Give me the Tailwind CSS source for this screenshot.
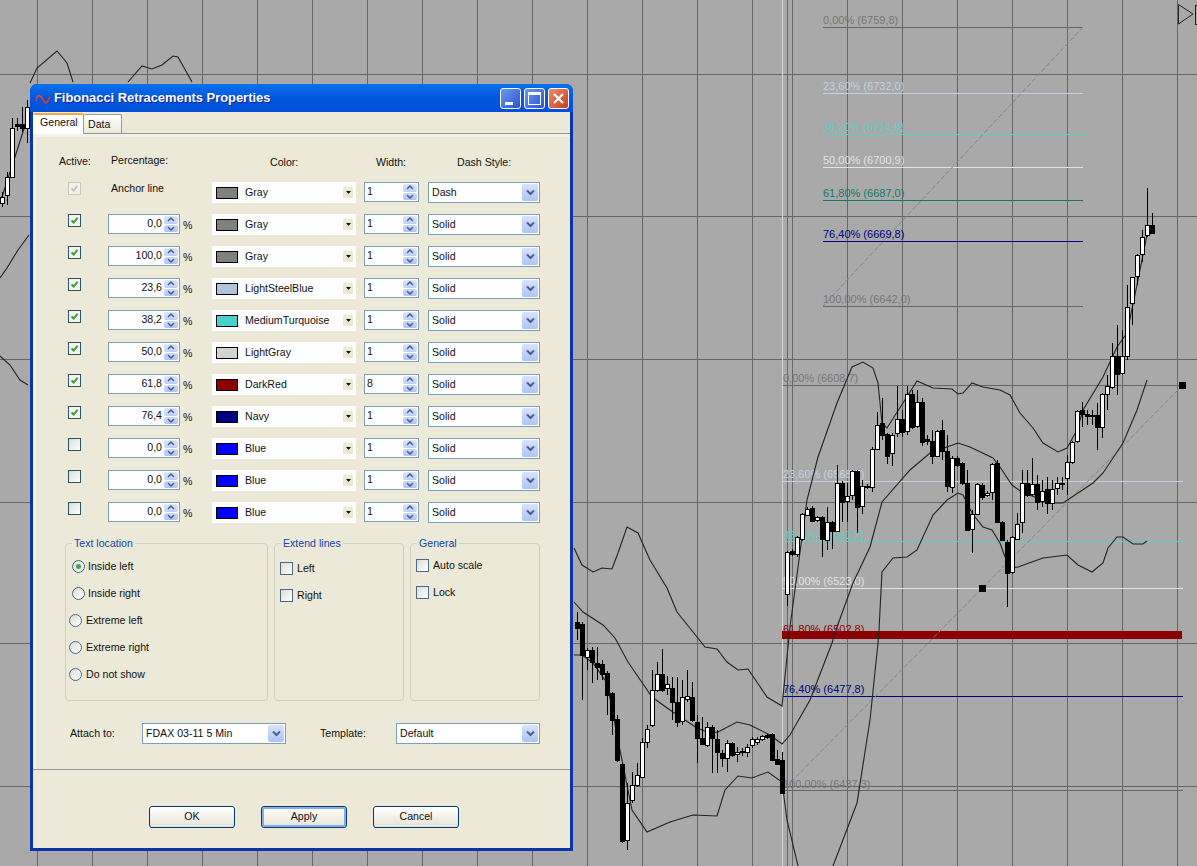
<!DOCTYPE html>
<html lang="en">
<head>
  <meta charset="UTF-8" />
  <title>Fibonacci Retracements Properties</title>
  <script src="https://cdn.jsdelivr.net/npm/@tailwindcss/browser@4"></script>
</head>
<body class="relative w-[1197px] h-[866px] overflow-hidden bg-[#a9a9a9] font-['Liberation_Sans',sans-serif] text-[10.6px] text-[#111]">

  <!-- shared icons -->
  <svg class="absolute w-0 h-0">
    <symbol id="chev" viewBox="0 0 9 7"><path d="M1 1.5 4.5 5 8 1.5" fill="none" stroke="#4d6185" stroke-width="2"/></symbol>
    <symbol id="up" viewBox="0 0 8 5"><path d="M1 4 4 1 7 4" fill="none" stroke="#4d6185" stroke-width="1.6"/></symbol>
    <symbol id="down" viewBox="0 0 8 5"><path d="M1 1 4 4 7 1" fill="none" stroke="#4d6185" stroke-width="1.6"/></symbol>
    <symbol id="tri" viewBox="0 0 5 3"><path d="M0 0H5L2.5 3Z" fill="#111"/></symbol>
    <symbol id="check" viewBox="0 0 13 13"><path d="M3 6.5 5.5 9 10 3.5" fill="none" stroke="#2f9e3a" stroke-width="2.2"/></symbol>
    <symbol id="checkoff" viewBox="0 0 13 13"><path d="M3 6.5 5.5 9 10 3.5" fill="none" stroke="#c4c3bb" stroke-width="2.2"/></symbol>
  </svg>

  <!-- chart -->
  <svg id="chart" class="absolute left-0 top-0" width="1197" height="866" viewBox="0 0 1197 866">
    <path stroke="#666" fill="none" d="M37.5 0V866M92.5 0V866M147.5 0V866M202.5 0V866M257.5 0V866M312.5 0V866M367.5 0V866M422.5 0V866M477.5 0V866M532.5 0V866M587.5 0V866M642.5 0V866M697.5 0V866M752.5 0V866M787.5 0V866M792.5 0V866M847.5 0V866M902.5 0V866M957.5 0V866M1012.5 0V866M1067.5 0V866M1122.5 0V866M1177.5 0V866M0 74.5H1197M0 216.5H1197M0 359.5H1197M0 502.5H1197M0 643.5H1197M0 786.5H1197"/>
    <path stroke="#d4d4d4" d="M782.5 0V866"/>
    <g fill="none">
      <path stroke="#666" d="M823 27.5H1083M823 306.5H1083M783 385.5H1183M783 790.5H1183"/>
      <path stroke="#c4d2e4" d="M823 93.5H1083M783 481.5H1183"/>
      <path stroke="#5ecdc2" d="M823 134.5H1087M783 541.5H1183"/>
      <path stroke="#e2e2e2" d="M823 167.5H1083M783 588.5H1183"/>
      <path stroke="#14796a" d="M823 200.5H1083"/>
      <path stroke="#000080" d="M823 241.5H1083M783 696.5H1183"/>
      <path stroke="#8b0000" stroke-width="8" d="M782 635H1182"/>
      <path stroke="#858585" stroke-dasharray="5 2" d="M1083 27 823 306M1183 385 783 790"/>
    </g>
    <g font-size="11">
      <text x="823" y="24" class="fill-[#777]">0,00% (6759,8)</text>
      <text x="823" y="90" class="fill-[#c4d0e2]">23,60% (6732,0)</text>
      <text x="823" y="131" class="fill-[#5ecdc2]">38,20% (6714,8)</text>
      <text x="823" y="164" class="fill-[#e2e2e2]">50,00% (6700,9)</text>
      <text x="823" y="197" class="fill-[#14796a]">61,80% (6687,0)</text>
      <text x="823" y="238" class="fill-[#000080]">76,40% (6669,8)</text>
      <text x="823" y="303" class="fill-[#777]">100,00% (6642,0)</text>
      <text x="783" y="382" class="fill-[#777]">0,00% (6608,7)</text>
      <text x="783" y="478" class="fill-[#c4d2e4]">23,60% (6568,2)</text>
      <text x="783" y="539" class="fill-[#5ecdc2]">38,20% (6543,2)</text>
      <text x="783" y="585" class="fill-[#e2e2e2]">50,00% (6523,0)</text>
      <text x="783" y="633" class="fill-[#8b0000]">61,80% (6502,8)</text>
      <text x="783" y="693" class="fill-[#000080]">76,40% (6477,8)</text>
      <text x="783" y="788" class="fill-[#777]">100,00% (6437,3)</text>
    </g>
    <g id="bands" fill="none" stroke="#222" stroke-width="1.1"></g>
    <g id="candles"></g>
    <rect x="1179" y="382" width="7" height="7" fill="#000"/>
    <rect x="979" y="585" width="7" height="7" fill="#000"/>
    <path d="M1178.5 4.5 1193 14 1178.5 24Z" fill="none" stroke="#222"/>
    <rect x="1195.5" y="5.5" width="5" height="19" fill="none" stroke="#222"/>
  </svg>

  <!-- dialog window -->
  <div class="absolute left-[30px] top-[84px] w-[543px] h-[767px] flex flex-col rounded-t-[7px] bg-[#0a35a8] px-[3px] pb-[3px]">
    <div class="h-[28px] shrink-0 -mx-[3px] rounded-t-[7px] bg-linear-to-b from-[#0b72ec] via-[#0257e0] to-[#0250d8] flex items-center pl-[5px] pr-[4px]">
      <svg width="16" height="12" viewBox="0 0 16 12" class="shrink-0 mt-[1px]"><path d="M1 8C3 1 5 1 7.5 6S12 11 15 4" fill="none" stroke="#c83c3c" stroke-width="2"/><path d="M1 5C3 2 5 2 7 5" fill="none" stroke="#6f7fc0" stroke-width="1"/></svg>
      <span class="ml-[3px] text-[12.9px] font-bold text-white leading-none [text-shadow:1px_1px_#10209a]">Fibonacci Retracements Properties</span>
      <div class="ml-auto flex gap-[3px]">
        <div class="w-[21px] h-[21px] rounded-[3px] border border-white bg-linear-to-br from-[#6f97f0] to-[#2a54d0] flex items-end pl-[4px] pb-[3px]"><div class="w-[8px] h-[3px] bg-white"></div></div>
        <div class="w-[21px] h-[21px] rounded-[3px] border border-white bg-linear-to-br from-[#6f97f0] to-[#2a54d0] flex items-center justify-center"><div class="w-[13px] h-[13px] border border-white border-t-[3px]"></div></div>
        <div class="w-[21px] h-[21px] rounded-[3px] border border-white bg-linear-to-br from-[#eb8a6c] to-[#c83a1c] flex items-center justify-center"><svg width="13" height="13" viewBox="0 0 13 13"><path d="M2 2 11 11M11 2 2 11" stroke="#fff" stroke-width="2.2"/></svg></div>
      </div>
    </div>

    <div class="flex-1 flex flex-col bg-[#ece9d8]">
      <!-- tabs -->
      <div class="h-[21px] shrink-0 flex items-end relative z-10">
        <div class="w-[51px] h-[21px] -mb-[1px] bg-white border-t-[2px] border-[#f2a93c] border-r border-r-[#919b9c] rounded-t-[2px] pl-[7px] leading-[15px]">General</div>
        <div class="w-[38px] h-[19px] bg-linear-to-b from-white to-[#ece9d8] border-t border-r border-[#919b9c] rounded-t-[2px] pl-[4px] leading-[19px]">Data</div>
      </div>

      <!-- General page -->
      <div class="h-[637px] shrink-0 border-t border-b border-[#919b9c] bg-[#f4f2e8] pl-[3px] pt-[3px]">
        <div class="h-full bg-[#ece9d8] flex flex-col">
          <div class="mt-[17px] pl-[23px] flex h-[14px] leading-[14px] shrink-0">
            <span class="w-[52px]">Active:</span><span class="w-[159px] -mt-[1px]">Percentage:</span><span class="w-[106px] mt-[1px]">Color:</span><span class="w-[81px] mt-[1px]">Width:</span><span class="mt-[1px]">Dash Style:</span>
          </div>

          <div class="mt-[14px] pl-[32px] flex flex-col shrink-0">
            <!-- anchor -->
            <div class="h-[32px] flex items-start">
              <div class="w-[40px]"><svg class="w-[13px] h-[13px] border border-[#c9c7ba] bg-[#f2f1ea]"><use href="#checkoff"/></svg></div>
              <div class="w-[104px] pl-[3px] leading-[13px]">Anchor line</div>
              <div class="w-[144px] h-[21px] bg-white flex items-center pl-[4px] pr-[3px]"><div class="w-[22px] h-[12px] border border-black bg-[#808080]"></div><span class="ml-[7px]">Gray</span><div class="ml-auto w-[10px] h-[11px] bg-[#ece9d8] flex items-center justify-center"><svg class="w-[5px] h-[3px]"><use href="#tri"/></svg></div></div>
              <div class="ml-[8px] w-[55px] h-[20px] bg-white border border-[#7f9db9] flex pl-[2px] leading-[17px]"><span>1</span><div class="ml-auto w-[14px] mr-[1px] my-[1px] flex flex-col gap-px"><div class="flex-1 bg-linear-to-b from-[#dde8fd] to-[#bfd0f6] rounded-[2px] flex items-center justify-center"><svg class="w-[8px] h-[5px]"><use href="#up"/></svg></div><div class="flex-1 bg-linear-to-b from-[#cddcfb] to-[#aec3f2] rounded-[2px] flex items-center justify-center"><svg class="w-[8px] h-[5px]"><use href="#down"/></svg></div></div></div>
              <div class="ml-[9px] w-[112px] h-[21px] bg-white border border-[#7f9db9] flex items-center pl-[3px]"><span>Dash</span><div class="ml-auto w-[16px] h-[17px] mr-px bg-linear-to-b from-[#d6e3fd] to-[#aec4f4] rounded-[2px] flex items-center justify-center"><svg class="w-[9px] h-[7px]"><use href="#chev"/></svg></div></div>
            </div>

            <!-- 0,0 Gray -->
            <div class="h-[32px] flex items-start">
              <div class="w-[40px]"><svg class="w-[13px] h-[13px] border border-[#2a5565] bg-[#f4f4ee]"><use href="#check"/></svg></div>
              <div class="w-[72px] h-[20px] bg-white border border-[#7f9db9] flex leading-[17px]"><span class="flex-1 text-right pr-[2px]">0,0</span><div class="w-[14px] mr-[1px] my-[1px] flex flex-col gap-px"><div class="flex-1 bg-linear-to-b from-[#dde8fd] to-[#bfd0f6] rounded-[2px] flex items-center justify-center"><svg class="w-[8px] h-[5px]"><use href="#up"/></svg></div><div class="flex-1 bg-linear-to-b from-[#cddcfb] to-[#aec3f2] rounded-[2px] flex items-center justify-center"><svg class="w-[8px] h-[5px]"><use href="#down"/></svg></div></div></div>
              <div class="w-[32px] pl-[3px] leading-[22px]">%</div>
              <div class="w-[144px] h-[21px] bg-white flex items-center pl-[4px] pr-[3px]"><div class="w-[22px] h-[12px] border border-black bg-[#808080]"></div><span class="ml-[7px]">Gray</span><div class="ml-auto w-[10px] h-[11px] bg-[#ece9d8] flex items-center justify-center"><svg class="w-[5px] h-[3px]"><use href="#tri"/></svg></div></div>
              <div class="ml-[8px] w-[55px] h-[20px] bg-white border border-[#7f9db9] flex pl-[2px] leading-[17px]"><span>1</span><div class="ml-auto w-[14px] mr-[1px] my-[1px] flex flex-col gap-px"><div class="flex-1 bg-linear-to-b from-[#dde8fd] to-[#bfd0f6] rounded-[2px] flex items-center justify-center"><svg class="w-[8px] h-[5px]"><use href="#up"/></svg></div><div class="flex-1 bg-linear-to-b from-[#cddcfb] to-[#aec3f2] rounded-[2px] flex items-center justify-center"><svg class="w-[8px] h-[5px]"><use href="#down"/></svg></div></div></div>
              <div class="ml-[9px] w-[112px] h-[21px] bg-white border border-[#7f9db9] flex items-center pl-[3px]"><span>Solid</span><div class="ml-auto w-[16px] h-[17px] mr-px bg-linear-to-b from-[#d6e3fd] to-[#aec4f4] rounded-[2px] flex items-center justify-center"><svg class="w-[9px] h-[7px]"><use href="#chev"/></svg></div></div>
            </div>

            <!-- 100,0 Gray -->
            <div class="h-[32px] flex items-start">
              <div class="w-[40px]"><svg class="w-[13px] h-[13px] border border-[#2a5565] bg-[#f4f4ee]"><use href="#check"/></svg></div>
              <div class="w-[72px] h-[20px] bg-white border border-[#7f9db9] flex leading-[17px]"><span class="flex-1 text-right pr-[2px]">100,0</span><div class="w-[14px] mr-[1px] my-[1px] flex flex-col gap-px"><div class="flex-1 bg-linear-to-b from-[#dde8fd] to-[#bfd0f6] rounded-[2px] flex items-center justify-center"><svg class="w-[8px] h-[5px]"><use href="#up"/></svg></div><div class="flex-1 bg-linear-to-b from-[#cddcfb] to-[#aec3f2] rounded-[2px] flex items-center justify-center"><svg class="w-[8px] h-[5px]"><use href="#down"/></svg></div></div></div>
              <div class="w-[32px] pl-[3px] leading-[22px]">%</div>
              <div class="w-[144px] h-[21px] bg-white flex items-center pl-[4px] pr-[3px]"><div class="w-[22px] h-[12px] border border-black bg-[#808080]"></div><span class="ml-[7px]">Gray</span><div class="ml-auto w-[10px] h-[11px] bg-[#ece9d8] flex items-center justify-center"><svg class="w-[5px] h-[3px]"><use href="#tri"/></svg></div></div>
              <div class="ml-[8px] w-[55px] h-[20px] bg-white border border-[#7f9db9] flex pl-[2px] leading-[17px]"><span>1</span><div class="ml-auto w-[14px] mr-[1px] my-[1px] flex flex-col gap-px"><div class="flex-1 bg-linear-to-b from-[#dde8fd] to-[#bfd0f6] rounded-[2px] flex items-center justify-center"><svg class="w-[8px] h-[5px]"><use href="#up"/></svg></div><div class="flex-1 bg-linear-to-b from-[#cddcfb] to-[#aec3f2] rounded-[2px] flex items-center justify-center"><svg class="w-[8px] h-[5px]"><use href="#down"/></svg></div></div></div>
              <div class="ml-[9px] w-[112px] h-[21px] bg-white border border-[#7f9db9] flex items-center pl-[3px]"><span>Solid</span><div class="ml-auto w-[16px] h-[17px] mr-px bg-linear-to-b from-[#d6e3fd] to-[#aec4f4] rounded-[2px] flex items-center justify-center"><svg class="w-[9px] h-[7px]"><use href="#chev"/></svg></div></div>
            </div>

            <!-- 23,6 LightSteelBlue -->
            <div class="h-[32px] flex items-start">
              <div class="w-[40px]"><svg class="w-[13px] h-[13px] border border-[#2a5565] bg-[#f4f4ee]"><use href="#check"/></svg></div>
              <div class="w-[72px] h-[20px] bg-white border border-[#7f9db9] flex leading-[17px]"><span class="flex-1 text-right pr-[2px]">23,6</span><div class="w-[14px] mr-[1px] my-[1px] flex flex-col gap-px"><div class="flex-1 bg-linear-to-b from-[#dde8fd] to-[#bfd0f6] rounded-[2px] flex items-center justify-center"><svg class="w-[8px] h-[5px]"><use href="#up"/></svg></div><div class="flex-1 bg-linear-to-b from-[#cddcfb] to-[#aec3f2] rounded-[2px] flex items-center justify-center"><svg class="w-[8px] h-[5px]"><use href="#down"/></svg></div></div></div>
              <div class="w-[32px] pl-[3px] leading-[22px]">%</div>
              <div class="w-[144px] h-[21px] bg-white flex items-center pl-[4px] pr-[3px]"><div class="w-[22px] h-[12px] border border-black bg-[#b0c4de]"></div><span class="ml-[7px]">LightSteelBlue</span><div class="ml-auto w-[10px] h-[11px] bg-[#ece9d8] flex items-center justify-center"><svg class="w-[5px] h-[3px]"><use href="#tri"/></svg></div></div>
              <div class="ml-[8px] w-[55px] h-[20px] bg-white border border-[#7f9db9] flex pl-[2px] leading-[17px]"><span>1</span><div class="ml-auto w-[14px] mr-[1px] my-[1px] flex flex-col gap-px"><div class="flex-1 bg-linear-to-b from-[#dde8fd] to-[#bfd0f6] rounded-[2px] flex items-center justify-center"><svg class="w-[8px] h-[5px]"><use href="#up"/></svg></div><div class="flex-1 bg-linear-to-b from-[#cddcfb] to-[#aec3f2] rounded-[2px] flex items-center justify-center"><svg class="w-[8px] h-[5px]"><use href="#down"/></svg></div></div></div>
              <div class="ml-[9px] w-[112px] h-[21px] bg-white border border-[#7f9db9] flex items-center pl-[3px]"><span>Solid</span><div class="ml-auto w-[16px] h-[17px] mr-px bg-linear-to-b from-[#d6e3fd] to-[#aec4f4] rounded-[2px] flex items-center justify-center"><svg class="w-[9px] h-[7px]"><use href="#chev"/></svg></div></div>
            </div>

            <!-- 38,2 MediumTurquoise -->
            <div class="h-[32px] flex items-start">
              <div class="w-[40px]"><svg class="w-[13px] h-[13px] border border-[#2a5565] bg-[#f4f4ee]"><use href="#check"/></svg></div>
              <div class="w-[72px] h-[20px] bg-white border border-[#7f9db9] flex leading-[17px]"><span class="flex-1 text-right pr-[2px]">38,2</span><div class="w-[14px] mr-[1px] my-[1px] flex flex-col gap-px"><div class="flex-1 bg-linear-to-b from-[#dde8fd] to-[#bfd0f6] rounded-[2px] flex items-center justify-center"><svg class="w-[8px] h-[5px]"><use href="#up"/></svg></div><div class="flex-1 bg-linear-to-b from-[#cddcfb] to-[#aec3f2] rounded-[2px] flex items-center justify-center"><svg class="w-[8px] h-[5px]"><use href="#down"/></svg></div></div></div>
              <div class="w-[32px] pl-[3px] leading-[22px]">%</div>
              <div class="w-[144px] h-[21px] bg-white flex items-center pl-[4px] pr-[3px]"><div class="w-[22px] h-[12px] border border-black bg-[#48d1cc]"></div><span class="ml-[7px]">MediumTurquoise</span><div class="ml-auto w-[10px] h-[11px] bg-[#ece9d8] flex items-center justify-center"><svg class="w-[5px] h-[3px]"><use href="#tri"/></svg></div></div>
              <div class="ml-[8px] w-[55px] h-[20px] bg-white border border-[#7f9db9] flex pl-[2px] leading-[17px]"><span>1</span><div class="ml-auto w-[14px] mr-[1px] my-[1px] flex flex-col gap-px"><div class="flex-1 bg-linear-to-b from-[#dde8fd] to-[#bfd0f6] rounded-[2px] flex items-center justify-center"><svg class="w-[8px] h-[5px]"><use href="#up"/></svg></div><div class="flex-1 bg-linear-to-b from-[#cddcfb] to-[#aec3f2] rounded-[2px] flex items-center justify-center"><svg class="w-[8px] h-[5px]"><use href="#down"/></svg></div></div></div>
              <div class="ml-[9px] w-[112px] h-[21px] bg-white border border-[#7f9db9] flex items-center pl-[3px]"><span>Solid</span><div class="ml-auto w-[16px] h-[17px] mr-px bg-linear-to-b from-[#d6e3fd] to-[#aec4f4] rounded-[2px] flex items-center justify-center"><svg class="w-[9px] h-[7px]"><use href="#chev"/></svg></div></div>
            </div>

            <!-- 50,0 LightGray -->
            <div class="h-[32px] flex items-start">
              <div class="w-[40px]"><svg class="w-[13px] h-[13px] border border-[#2a5565] bg-[#f4f4ee]"><use href="#check"/></svg></div>
              <div class="w-[72px] h-[20px] bg-white border border-[#7f9db9] flex leading-[17px]"><span class="flex-1 text-right pr-[2px]">50,0</span><div class="w-[14px] mr-[1px] my-[1px] flex flex-col gap-px"><div class="flex-1 bg-linear-to-b from-[#dde8fd] to-[#bfd0f6] rounded-[2px] flex items-center justify-center"><svg class="w-[8px] h-[5px]"><use href="#up"/></svg></div><div class="flex-1 bg-linear-to-b from-[#cddcfb] to-[#aec3f2] rounded-[2px] flex items-center justify-center"><svg class="w-[8px] h-[5px]"><use href="#down"/></svg></div></div></div>
              <div class="w-[32px] pl-[3px] leading-[22px]">%</div>
              <div class="w-[144px] h-[21px] bg-white flex items-center pl-[4px] pr-[3px]"><div class="w-[22px] h-[12px] border border-black bg-[#d3d3d3]"></div><span class="ml-[7px]">LightGray</span><div class="ml-auto w-[10px] h-[11px] bg-[#ece9d8] flex items-center justify-center"><svg class="w-[5px] h-[3px]"><use href="#tri"/></svg></div></div>
              <div class="ml-[8px] w-[55px] h-[20px] bg-white border border-[#7f9db9] flex pl-[2px] leading-[17px]"><span>1</span><div class="ml-auto w-[14px] mr-[1px] my-[1px] flex flex-col gap-px"><div class="flex-1 bg-linear-to-b from-[#dde8fd] to-[#bfd0f6] rounded-[2px] flex items-center justify-center"><svg class="w-[8px] h-[5px]"><use href="#up"/></svg></div><div class="flex-1 bg-linear-to-b from-[#cddcfb] to-[#aec3f2] rounded-[2px] flex items-center justify-center"><svg class="w-[8px] h-[5px]"><use href="#down"/></svg></div></div></div>
              <div class="ml-[9px] w-[112px] h-[21px] bg-white border border-[#7f9db9] flex items-center pl-[3px]"><span>Solid</span><div class="ml-auto w-[16px] h-[17px] mr-px bg-linear-to-b from-[#d6e3fd] to-[#aec4f4] rounded-[2px] flex items-center justify-center"><svg class="w-[9px] h-[7px]"><use href="#chev"/></svg></div></div>
            </div>

            <!-- 61,8 DarkRed -->
            <div class="h-[32px] flex items-start">
              <div class="w-[40px]"><svg class="w-[13px] h-[13px] border border-[#2a5565] bg-[#f4f4ee]"><use href="#check"/></svg></div>
              <div class="w-[72px] h-[20px] bg-white border border-[#7f9db9] flex leading-[17px]"><span class="flex-1 text-right pr-[2px]">61,8</span><div class="w-[14px] mr-[1px] my-[1px] flex flex-col gap-px"><div class="flex-1 bg-linear-to-b from-[#dde8fd] to-[#bfd0f6] rounded-[2px] flex items-center justify-center"><svg class="w-[8px] h-[5px]"><use href="#up"/></svg></div><div class="flex-1 bg-linear-to-b from-[#cddcfb] to-[#aec3f2] rounded-[2px] flex items-center justify-center"><svg class="w-[8px] h-[5px]"><use href="#down"/></svg></div></div></div>
              <div class="w-[32px] pl-[3px] leading-[22px]">%</div>
              <div class="w-[144px] h-[21px] bg-white flex items-center pl-[4px] pr-[3px]"><div class="w-[22px] h-[12px] border border-black bg-[#8b0000]"></div><span class="ml-[7px]">DarkRed</span><div class="ml-auto w-[10px] h-[11px] bg-[#ece9d8] flex items-center justify-center"><svg class="w-[5px] h-[3px]"><use href="#tri"/></svg></div></div>
              <div class="ml-[8px] w-[55px] h-[20px] bg-white border border-[#7f9db9] flex pl-[2px] leading-[17px]"><span>8</span><div class="ml-auto w-[14px] mr-[1px] my-[1px] flex flex-col gap-px"><div class="flex-1 bg-linear-to-b from-[#dde8fd] to-[#bfd0f6] rounded-[2px] flex items-center justify-center"><svg class="w-[8px] h-[5px]"><use href="#up"/></svg></div><div class="flex-1 bg-linear-to-b from-[#cddcfb] to-[#aec3f2] rounded-[2px] flex items-center justify-center"><svg class="w-[8px] h-[5px]"><use href="#down"/></svg></div></div></div>
              <div class="ml-[9px] w-[112px] h-[21px] bg-white border border-[#7f9db9] flex items-center pl-[3px]"><span>Solid</span><div class="ml-auto w-[16px] h-[17px] mr-px bg-linear-to-b from-[#d6e3fd] to-[#aec4f4] rounded-[2px] flex items-center justify-center"><svg class="w-[9px] h-[7px]"><use href="#chev"/></svg></div></div>
            </div>

            <!-- 76,4 Navy -->
            <div class="h-[32px] flex items-start">
              <div class="w-[40px]"><svg class="w-[13px] h-[13px] border border-[#2a5565] bg-[#f4f4ee]"><use href="#check"/></svg></div>
              <div class="w-[72px] h-[20px] bg-white border border-[#7f9db9] flex leading-[17px]"><span class="flex-1 text-right pr-[2px]">76,4</span><div class="w-[14px] mr-[1px] my-[1px] flex flex-col gap-px"><div class="flex-1 bg-linear-to-b from-[#dde8fd] to-[#bfd0f6] rounded-[2px] flex items-center justify-center"><svg class="w-[8px] h-[5px]"><use href="#up"/></svg></div><div class="flex-1 bg-linear-to-b from-[#cddcfb] to-[#aec3f2] rounded-[2px] flex items-center justify-center"><svg class="w-[8px] h-[5px]"><use href="#down"/></svg></div></div></div>
              <div class="w-[32px] pl-[3px] leading-[22px]">%</div>
              <div class="w-[144px] h-[21px] bg-white flex items-center pl-[4px] pr-[3px]"><div class="w-[22px] h-[12px] border border-black bg-[#000080]"></div><span class="ml-[7px]">Navy</span><div class="ml-auto w-[10px] h-[11px] bg-[#ece9d8] flex items-center justify-center"><svg class="w-[5px] h-[3px]"><use href="#tri"/></svg></div></div>
              <div class="ml-[8px] w-[55px] h-[20px] bg-white border border-[#7f9db9] flex pl-[2px] leading-[17px]"><span>1</span><div class="ml-auto w-[14px] mr-[1px] my-[1px] flex flex-col gap-px"><div class="flex-1 bg-linear-to-b from-[#dde8fd] to-[#bfd0f6] rounded-[2px] flex items-center justify-center"><svg class="w-[8px] h-[5px]"><use href="#up"/></svg></div><div class="flex-1 bg-linear-to-b from-[#cddcfb] to-[#aec3f2] rounded-[2px] flex items-center justify-center"><svg class="w-[8px] h-[5px]"><use href="#down"/></svg></div></div></div>
              <div class="ml-[9px] w-[112px] h-[21px] bg-white border border-[#7f9db9] flex items-center pl-[3px]"><span>Solid</span><div class="ml-auto w-[16px] h-[17px] mr-px bg-linear-to-b from-[#d6e3fd] to-[#aec4f4] rounded-[2px] flex items-center justify-center"><svg class="w-[9px] h-[7px]"><use href="#chev"/></svg></div></div>
            </div>

            <!-- unused levels -->
            <div class="h-[32px] flex items-start">
              <div class="w-[40px]"><div class="w-[13px] h-[13px] border border-[#2a5565] bg-linear-to-br from-[#dcdcd7] to-white"></div></div>
              <div class="w-[72px] h-[20px] bg-white border border-[#7f9db9] flex leading-[17px]"><span class="flex-1 text-right pr-[2px]">0,0</span><div class="w-[14px] mr-[1px] my-[1px] flex flex-col gap-px"><div class="flex-1 bg-linear-to-b from-[#dde8fd] to-[#bfd0f6] rounded-[2px] flex items-center justify-center"><svg class="w-[8px] h-[5px]"><use href="#up"/></svg></div><div class="flex-1 bg-linear-to-b from-[#cddcfb] to-[#aec3f2] rounded-[2px] flex items-center justify-center"><svg class="w-[8px] h-[5px]"><use href="#down"/></svg></div></div></div>
              <div class="w-[32px] pl-[3px] leading-[22px]">%</div>
              <div class="w-[144px] h-[21px] bg-white flex items-center pl-[4px] pr-[3px]"><div class="w-[22px] h-[12px] border border-black bg-[#0000ff]"></div><span class="ml-[7px]">Blue</span><div class="ml-auto w-[10px] h-[11px] bg-[#ece9d8] flex items-center justify-center"><svg class="w-[5px] h-[3px]"><use href="#tri"/></svg></div></div>
              <div class="ml-[8px] w-[55px] h-[20px] bg-white border border-[#7f9db9] flex pl-[2px] leading-[17px]"><span>1</span><div class="ml-auto w-[14px] mr-[1px] my-[1px] flex flex-col gap-px"><div class="flex-1 bg-linear-to-b from-[#dde8fd] to-[#bfd0f6] rounded-[2px] flex items-center justify-center"><svg class="w-[8px] h-[5px]"><use href="#up"/></svg></div><div class="flex-1 bg-linear-to-b from-[#cddcfb] to-[#aec3f2] rounded-[2px] flex items-center justify-center"><svg class="w-[8px] h-[5px]"><use href="#down"/></svg></div></div></div>
              <div class="ml-[9px] w-[112px] h-[21px] bg-white border border-[#7f9db9] flex items-center pl-[3px]"><span>Solid</span><div class="ml-auto w-[16px] h-[17px] mr-px bg-linear-to-b from-[#d6e3fd] to-[#aec4f4] rounded-[2px] flex items-center justify-center"><svg class="w-[9px] h-[7px]"><use href="#chev"/></svg></div></div>
            </div>
            <div class="h-[32px] flex items-start">
              <div class="w-[40px]"><div class="w-[13px] h-[13px] border border-[#2a5565] bg-linear-to-br from-[#dcdcd7] to-white"></div></div>
              <div class="w-[72px] h-[20px] bg-white border border-[#7f9db9] flex leading-[17px]"><span class="flex-1 text-right pr-[2px]">0,0</span><div class="w-[14px] mr-[1px] my-[1px] flex flex-col gap-px"><div class="flex-1 bg-linear-to-b from-[#dde8fd] to-[#bfd0f6] rounded-[2px] flex items-center justify-center"><svg class="w-[8px] h-[5px]"><use href="#up"/></svg></div><div class="flex-1 bg-linear-to-b from-[#cddcfb] to-[#aec3f2] rounded-[2px] flex items-center justify-center"><svg class="w-[8px] h-[5px]"><use href="#down"/></svg></div></div></div>
              <div class="w-[32px] pl-[3px] leading-[22px]">%</div>
              <div class="w-[144px] h-[21px] bg-white flex items-center pl-[4px] pr-[3px]"><div class="w-[22px] h-[12px] border border-black bg-[#0000ff]"></div><span class="ml-[7px]">Blue</span><div class="ml-auto w-[10px] h-[11px] bg-[#ece9d8] flex items-center justify-center"><svg class="w-[5px] h-[3px]"><use href="#tri"/></svg></div></div>
              <div class="ml-[8px] w-[55px] h-[20px] bg-white border border-[#7f9db9] flex pl-[2px] leading-[17px]"><span>1</span><div class="ml-auto w-[14px] mr-[1px] my-[1px] flex flex-col gap-px"><div class="flex-1 bg-linear-to-b from-[#dde8fd] to-[#bfd0f6] rounded-[2px] flex items-center justify-center"><svg class="w-[8px] h-[5px]"><use href="#up"/></svg></div><div class="flex-1 bg-linear-to-b from-[#cddcfb] to-[#aec3f2] rounded-[2px] flex items-center justify-center"><svg class="w-[8px] h-[5px]"><use href="#down"/></svg></div></div></div>
              <div class="ml-[9px] w-[112px] h-[21px] bg-white border border-[#7f9db9] flex items-center pl-[3px]"><span>Solid</span><div class="ml-auto w-[16px] h-[17px] mr-px bg-linear-to-b from-[#d6e3fd] to-[#aec4f4] rounded-[2px] flex items-center justify-center"><svg class="w-[9px] h-[7px]"><use href="#chev"/></svg></div></div>
            </div>
            <div class="h-[32px] flex items-start">
              <div class="w-[40px]"><div class="w-[13px] h-[13px] border border-[#2a5565] bg-linear-to-br from-[#dcdcd7] to-white"></div></div>
              <div class="w-[72px] h-[20px] bg-white border border-[#7f9db9] flex leading-[17px]"><span class="flex-1 text-right pr-[2px]">0,0</span><div class="w-[14px] mr-[1px] my-[1px] flex flex-col gap-px"><div class="flex-1 bg-linear-to-b from-[#dde8fd] to-[#bfd0f6] rounded-[2px] flex items-center justify-center"><svg class="w-[8px] h-[5px]"><use href="#up"/></svg></div><div class="flex-1 bg-linear-to-b from-[#cddcfb] to-[#aec3f2] rounded-[2px] flex items-center justify-center"><svg class="w-[8px] h-[5px]"><use href="#down"/></svg></div></div></div>
              <div class="w-[32px] pl-[3px] leading-[22px]">%</div>
              <div class="w-[144px] h-[21px] bg-white flex items-center pl-[4px] pr-[3px]"><div class="w-[22px] h-[12px] border border-black bg-[#0000ff]"></div><span class="ml-[7px]">Blue</span><div class="ml-auto w-[10px] h-[11px] bg-[#ece9d8] flex items-center justify-center"><svg class="w-[5px] h-[3px]"><use href="#tri"/></svg></div></div>
              <div class="ml-[8px] w-[55px] h-[20px] bg-white border border-[#7f9db9] flex pl-[2px] leading-[17px]"><span>1</span><div class="ml-auto w-[14px] mr-[1px] my-[1px] flex flex-col gap-px"><div class="flex-1 bg-linear-to-b from-[#dde8fd] to-[#bfd0f6] rounded-[2px] flex items-center justify-center"><svg class="w-[8px] h-[5px]"><use href="#up"/></svg></div><div class="flex-1 bg-linear-to-b from-[#cddcfb] to-[#aec3f2] rounded-[2px] flex items-center justify-center"><svg class="w-[8px] h-[5px]"><use href="#down"/></svg></div></div></div>
              <div class="ml-[9px] w-[112px] h-[21px] bg-white border border-[#7f9db9] flex items-center pl-[3px]"><span>Solid</span><div class="ml-auto w-[16px] h-[17px] mr-px bg-linear-to-b from-[#d6e3fd] to-[#aec4f4] rounded-[2px] flex items-center justify-center"><svg class="w-[9px] h-[7px]"><use href="#chev"/></svg></div></div>
            </div>
          </div>

          <!-- group boxes -->
          <div class="mt-[3px] pl-[29px] flex gap-[6px] shrink-0">
            <fieldset class="w-[203px] h-[164px] border border-[#d0d0bf] rounded-[4px]">
              <legend class="ml-[6px] px-[2px] leading-[13px] text-[#1546a8]">Text location</legend>
              <div class="mt-[3px] flex flex-col">
                <div class="h-[27px] flex items-center pl-[6px]"><div class="w-[13px] h-[13px] rounded-full border border-[#4c6a80] bg-linear-to-br from-[#dcdcd7] to-white flex items-center justify-center"><div class="w-[5px] h-[5px] rounded-full bg-[#35a84a]"></div></div><span class="ml-[3px]">Inside left</span></div>
                <div class="h-[27px] flex items-center pl-[6px]"><div class="w-[13px] h-[13px] rounded-full border border-[#4c6a80] bg-linear-to-br from-[#dcdcd7] to-white"></div><span class="ml-[3px]">Inside right</span></div>
                <div class="h-[27px] flex items-center pl-[3px]"><div class="w-[13px] h-[13px] rounded-full border border-[#4c6a80] bg-linear-to-br from-[#dcdcd7] to-white"></div><span class="ml-[4px]">Extreme left</span></div>
                <div class="h-[27px] flex items-center pl-[3px]"><div class="w-[13px] h-[13px] rounded-full border border-[#4c6a80] bg-linear-to-br from-[#dcdcd7] to-white"></div><span class="ml-[4px]">Extreme right</span></div>
                <div class="h-[27px] flex items-center pl-[3px]"><div class="w-[13px] h-[13px] rounded-full border border-[#4c6a80] bg-linear-to-br from-[#dcdcd7] to-white"></div><span class="ml-[4px]">Do not show</span></div>
              </div>
            </fieldset>
            <fieldset class="w-[130px] h-[164px] border border-[#d0d0bf] rounded-[4px]">
              <legend class="ml-[6px] px-[2px] leading-[13px] text-[#1546a8]">Extend lines</legend>
              <div class="mt-[5px] flex flex-col">
                <div class="h-[27px] flex items-center pl-[5px]"><div class="w-[13px] h-[13px] border border-[#4c6a80] bg-linear-to-br from-[#dcdcd7] to-white"></div><span class="ml-[4px]">Left</span></div>
                <div class="h-[27px] flex items-center pl-[5px]"><div class="w-[13px] h-[13px] border border-[#4c6a80] bg-linear-to-br from-[#dcdcd7] to-white"></div><span class="ml-[4px]">Right</span></div>
              </div>
            </fieldset>
            <fieldset class="w-[130px] h-[164px] border border-[#d0d0bf] rounded-[4px]">
              <legend class="ml-[6px] px-[2px] leading-[13px] text-[#1546a8]">General</legend>
              <div class="mt-[2px] flex flex-col">
                <div class="h-[27px] flex items-center pl-[5px]"><div class="w-[13px] h-[13px] border border-[#4c6a80] bg-linear-to-br from-[#dcdcd7] to-white"></div><span class="ml-[4px]">Auto scale</span></div>
                <div class="h-[27px] flex items-center pl-[5px]"><div class="w-[13px] h-[13px] border border-[#4c6a80] bg-linear-to-br from-[#dcdcd7] to-white"></div><span class="ml-[4px]">Lock</span></div>
              </div>
            </fieldset>
          </div>

          <!-- attach row -->
          <div class="mt-[22px] pl-[34px] flex items-center h-[21px] shrink-0">
            <span class="w-[72px]">Attach to:</span>
            <div class="w-[144px] h-[21px] bg-white border border-[#7f9db9] flex items-center pl-[3px]"><span>FDAX 03-11 5 Min</span><div class="ml-auto w-[16px] h-[17px] mr-px bg-linear-to-b from-[#d6e3fd] to-[#aec4f4] rounded-[2px] flex items-center justify-center"><svg class="w-[9px] h-[7px]"><use href="#chev"/></svg></div></div>
            <span class="ml-[34px] w-[76px]">Template:</span>
            <div class="w-[144px] h-[21px] bg-white border border-[#7f9db9] flex items-center pl-[3px]"><span>Default</span><div class="ml-auto w-[16px] h-[17px] mr-px bg-linear-to-b from-[#d6e3fd] to-[#aec4f4] rounded-[2px] flex items-center justify-center"><svg class="w-[9px] h-[7px]"><use href="#chev"/></svg></div></div>
          </div>
        </div>
      </div>

      <!-- buttons -->
      <div class="mt-[36px] pl-[116px] flex gap-[26px]">
        <button class="w-[86px] h-[22px] rounded-[3px] border border-[#003c74] bg-linear-to-b from-white to-[#e6e3d6]">OK</button>
        <button class="w-[86px] h-[22px] rounded-[3px] border border-[#003c74] bg-linear-to-b from-white to-[#e6e3d6] shadow-[inset_0_0_0_2px_#8aaae8]">Apply</button>
        <button class="w-[86px] h-[22px] rounded-[3px] border border-[#003c74] bg-linear-to-b from-white to-[#e6e3d6]">Cancel</button>
      </div>
    </div>
  </div>

  <script>
    // candles: x, colour, body top, body bottom, wick top, wick bottom
    const left = [
      [2,'w',197,203,192,207],[7,'w',177,195,172,205],[12,'w',128,177,118,178],[17,'b',124,126,118,131],[22,'b',124,128,107,132],[27,'w',107,128,100,143]
    ];
    const a = `b 622 628 612 640,b 624 655 622 700,w 650 657 648 670,b 650 662 647 683,b 663 667 647 680,b 664 674 660 680,b 673 695 671 715,b 693 720 692 735,b 719 760 715 762,b 764 841 763 843,w 803 840 783 850,w 785 800 772 803,w 775 785 763 787,w 742 777 738 778,w 729 742 725 748,w 690 725 670 727,w 674 690 662 692,b 674 690 649 692,w 684 688 676 695,b 688 702 677 720,b 702 722 677 727,w 697 721 680 725,w 696 699 670 702,b 697 720 682 722,b 722 738 715 763,b 738 744 717 745,w 727 745 722 747,b 727 738 725 773,b 739 752 730 773,b 753 758 750 767,w 743 758 740 772,b 743 755 742 757,w 752 754 747 762,w 751 752 748 756,w 747 752 744 757,w 739 745 737 748,w 739 742 737 745,w 736 739 735 741,b 735 737 734 739,b 734 760 733 761,b 759 764 750 765,b 760 793 752 794,w 552 594 551 606,b 551 554 549 556,w 537 554 536 557,w 514 539 513 541,w 509 515 507 516,b 508 521 506 522,w 517 520 516 522,b 517 539 516 557,w 522 540 507 550,b 522 531 521 549,w 483 531 465 532,b 483 502 481 522,w 496 501 483 522,w 471 495 470 500,b 471 507 470 533,w 486 506 480 514,b 486 487 484 489,w 449 487 447 492,w 425 449 412 450,b 423 435 398 440,b 434 456 433 464,w 435 453 433 466,w 419 433 386 437,b 419 432 410 437,w 394 431 386 435,b 394 427 390 429,w 402 426 390 428,b 402 442 398 446,b 439 441 435 445,b 441 456 430 464,w 431 456 430 457,b 430 451 420 460,b 451 486 435 492,w 458 487 456 493,b 458 465 456 467,b 463 483 462 485,b 483 530 470 531,w 514 529 510 553,w 484 514 483 515,b 485 497 483 500,w 493 495 491 497,w 464 492 463 500,b 463 522 460 523,b 522 540 521 541,b 542 573 540 607,w 537 572 536 574,w 524 539 513 534,w 483 522 470 533,b 483 495 470 497,w 484 494 458 496,b 484 502 475 510,w 491 501 480 507,b 489 503 477 514,w 489 503 480 510,w 483 488 477 495,b 483 484 477 490,w 462 478 455 495,w 442 462 441 464,w 411 441 410 443,b 410 414 402 427,b 414 416 410 425,b 415 416 410 425,b 415 427 403 450,w 394 427 393 438,w 386 394 375 410,w 356 387 343 389,b 356 374 325 395,w 356 373 330 375,w 307 356 285 360,w 277 303 285 325,w 255 276 254 285,w 237 254 230 262,w 225 235 188 237,b 225 233 213 234`.split(',');
    const series = left.slice();
    a.forEach((s, i) => {
      const p = s.split(' ');
      series.push([577 + i * 5, p[0], +p[1], +p[2], +p[3], +p[4]]);
    });
    let c = '';
    series.forEach(([x, col, t, b, h, l]) => {
      c += `<path d="M${x + .5} ${Math.min(h, t)}V${Math.max(l, b)}" stroke="#000"/>`;
      c += `<rect x="${x - 1.5}" y="${t + .5}" width="4" height="${Math.max(b - t, 1)}" fill="${col == 'w' ? '#fff' : '#000'}" stroke="#000"/>`;
    });
    document.getElementById('candles').innerHTML = c;

    // bollinger bands
    const bands = [
      '30 83 37 68 57 51 67 63 73 82', '128 82 142 66 152 69 162 65 173 56 178 57 192 82',
      '0 278 7 268 18 250 29 235', '0 356 10 365 20 380 28 385', '0 203 14 160 30 110',
      '574 548 582 565 593 572 602 568 612 569 618 553 627 527 638 533 650 560 667 588 677 612 697 637 705 647 717 649 727 662 738 670 748 669 767 697 782 706 790 627 807 500 818 457 837 403 852 367 863 362 873 368 878 383 882 423 887 428 917 381 933 388 952 389 958 394 963 393 972 383 983 387 1000 390 1010 395 1020 413 1033 428 1043 443 1058 452 1067 448 1077 430 1083 410 1103 377 1117 347 1127 333 1137 285 1147 235',
      '574 602 583 612 603 625 615 638 628 662 652 697 670 710 697 728 710 733 718 732 737 722 750 725 770 735 782 744 790 735 810 700 832 643 837 627 853 583 870 547 882 502 910 470 930 453 947 447 958 443 970 447 993 458 1000 467 1012 485 1023 493 1053 503 1063 503 1093 483 1103 473 1123 443 1137 410 1147 380',
      '574 655 582 655 593 663 607 683 620 750 632 810 647 832 670 822 693 815 717 816 725 790 738 776 752 778 768 772 782 782 787 820 798 866',
      '833 866 857 803 870 720 878 643 879 630 882 572 893 558 907 557 917 550 933 515 947 500 958 493 963 495 972 513 983 527 992 530 1000 543 1005 557 1012 568 1018 567 1043 558 1067 555 1078 565 1092 572 1103 563 1108 548 1117 537 1123 537 1133 544 1143 544 1147 541'
    ];
    document.getElementById('bands').innerHTML = bands.map(p => `<polyline points="${p}"/>`).join('');
  </script>
</body>
</html>
